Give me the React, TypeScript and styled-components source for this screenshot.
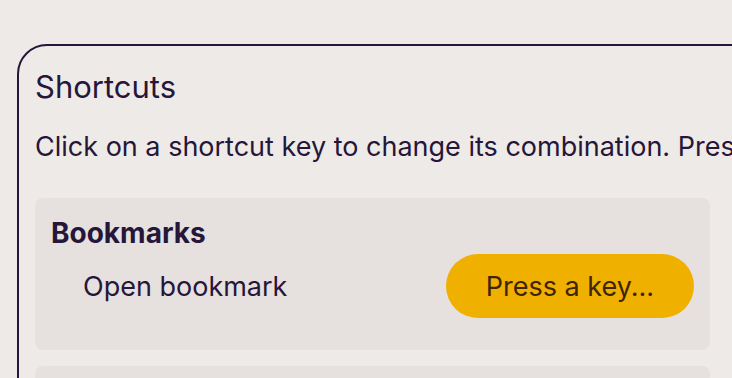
import styled, { createGlobalStyle } from "styled-components";

const GlobalStyle = createGlobalStyle`
  html, body {
    margin: 0;
    padding: 0;
    background: #eeeae7;
    overflow: hidden;
  }
  body {
    font-family: Inter, "Noto Sans", sans-serif;
    color: #25163a;
  }
`;

const Page = styled.div`
  padding: 44px 0 0 17px;
`;

const Panel = styled.section`
  width: 1000px;
  min-height: 400px;
  border: 2px solid #25163a;
  border-radius: 30px;
  padding: 24px 16px;
  box-sizing: border-box;
`;

const Title = styled.h2`
  margin: 0;
  font-size: 31px;
  font-weight: 400;
  line-height: 34px;
`;

const Description = styled.p`
  margin: 28px 0 0;
  font-size: 27px;
  line-height: 29px;
  white-space: nowrap;
`;

const Groups = styled.div`
  display: flex;
  flex-direction: column;
  gap: 16px;
  margin-top: 37px;
  width: 675px;
`;

const Group = styled.div`
  background: #e6e0de;
  border-radius: 8px;
  padding: 21px 16px 32px;
`;

const GroupTitle = styled.h3`
  margin: 0;
  font-size: 28px;
  font-weight: 700;
  line-height: 29px;
`;

const Row = styled.div`
  display: flex;
  align-items: center;
  justify-content: space-between;
  margin-top: 6px;
  padding-left: 32px;
`;

const Label = styled.span`
  font-size: 27px;
`;

interface KeyButtonProps {
  listening: boolean;
}

const KeyButton = styled.button<KeyButtonProps>`
  height: 64px;
  padding: 0 40px;
  border: none;
  border-radius: 32px;
  font-family: inherit;
  font-size: 27px;
  color: ${(p) => (p.listening ? "#3f2406" : "#25163a")};
  background: ${(p) => (p.listening ? "#f0b000" : "#d9d2cf")};
  cursor: pointer;
`;

const groups = [
  { name: "Bookmarks", items: [{ label: "Open bookmark", listening: true }] },
  { name: "History", items: [{ label: "Open history", listening: false }] },
];

export default function App() {
  return (
    <Page>
      <GlobalStyle />
      <Panel>
        <Title>Shortcuts</Title>
        <Description>
          Click on a shortcut key to change its combination. Press Escape to cancel.
        </Description>
        <Groups>
          {groups.map((g) => (
            <Group key={g.name}>
              <GroupTitle>{g.name}</GroupTitle>
              {g.items.map((item) => (
                <Row key={item.label}>
                  <Label>{item.label}</Label>
                  <KeyButton listening={item.listening}>
                    {item.listening ? "Press a key..." : "Ctrl+B"}
                  </KeyButton>
                </Row>
              ))}
            </Group>
          ))}
        </Groups>
      </Panel>
    </Page>
  );
}
